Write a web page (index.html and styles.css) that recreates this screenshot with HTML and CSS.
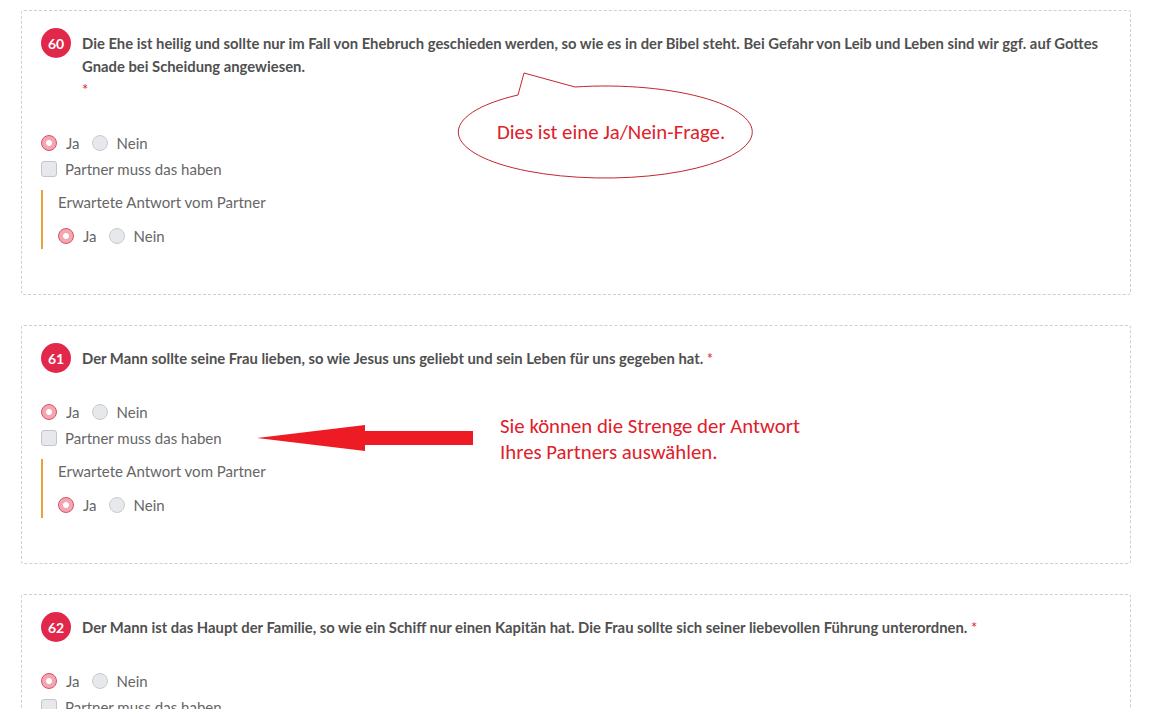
FILE: index.html
```html
<!DOCTYPE html>
<html lang="de">
<head>
<meta charset="utf-8">
<title>Fragen</title>
<link rel="stylesheet" href="styles.css">
</head>
<body>
<div class="page">
  <div class="card">
    <div class="qhead">
      <span class="badge">60</span>
      <div class="qtext">Die Ehe ist heilig und sollte nur im Fall von Ehebruch geschieden werden, so wie es in der Bibel steht. Bei Gefahr von Leib und Leben sind wir ggf. auf Gottes Gnade bei Scheidung angewiesen.<br><span class="req">*</span></div>
    </div>
    <div class="options">
      <div class="radios">
        <span class="opt"><span class="radio on"></span>Ja</span>
        <span class="opt"><span class="radio"></span>Nein</span>
      </div>
      <div class="check"><span class="box"></span>Partner muss das haben</div>
      <div class="partner">
        <div class="plabel">Erwartete Antwort vom Partner</div>
        <div class="radios">
          <span class="opt"><span class="radio on"></span>Ja</span>
          <span class="opt"><span class="radio"></span>Nein</span>
        </div>
      </div>
    </div>
  </div>

  <div class="card">
    <div class="qhead">
      <span class="badge">61</span>
      <div class="qtext">Der Mann sollte seine Frau lieben, so wie Jesus uns geliebt und sein Leben für uns gegeben hat. <span class="req">*</span></div>
    </div>
    <div class="options">
      <div class="radios">
        <span class="opt"><span class="radio on"></span>Ja</span>
        <span class="opt"><span class="radio"></span>Nein</span>
      </div>
      <div class="check"><span class="box"></span>Partner muss das haben</div>
      <div class="partner">
        <div class="plabel">Erwartete Antwort vom Partner</div>
        <div class="radios">
          <span class="opt"><span class="radio on"></span>Ja</span>
          <span class="opt"><span class="radio"></span>Nein</span>
        </div>
      </div>
    </div>
  </div>

  <div class="card">
    <div class="qhead">
      <span class="badge">62</span>
      <div class="qtext">Der Mann ist das Haupt der Familie, so wie ein Schiff nur einen Kapitän hat. Die Frau sollte sich seiner liebevollen Führung unterordnen. <span class="req">*</span></div>
    </div>
    <div class="options">
      <div class="radios">
        <span class="opt"><span class="radio on"></span>Ja</span>
        <span class="opt"><span class="radio"></span>Nein</span>
      </div>
      <div class="check"><span class="box"></span>Partner muss das haben</div>
      <div class="partner">
        <div class="plabel">Erwartete Antwort vom Partner</div>
        <div class="radios">
          <span class="opt"><span class="radio on"></span>Ja</span>
          <span class="opt"><span class="radio"></span>Nein</span>
        </div>
      </div>
    </div>
  </div>

  <svg class="annot" width="1158" height="709" viewBox="0 0 1158 709">
    <path d="M518 95 L524 73 L575 87 A147 46 0 1 1 518 95 Z" fill="#fff" stroke="#c0282f" stroke-width="1"/>
    <path d="M257 438 L365 425 L365 431 L473 431 L473 445 L365 445 L365 451 Z" fill="#ed1c24"/>
  </svg>
  <div class="bubble-text">Dies ist eine Ja/Nein-Frage.</div>
  <div class="note">Sie können die Strenge der Antwort<br>Ihres Partners auswählen.</div>
</div>
</body>
</html>
```
FILE: styles.css
```css
* { box-sizing: border-box; }
html, body { margin: 0; padding: 0; background: #fff; }
body { overflow: hidden; height: 709px; }
.page {
  position: relative;
  width: 1158px;
  height: 709px;
  overflow: hidden;
  padding: 10px 0 0 21px;
  font-family: Lato, "Liberation Sans", sans-serif;
  color: #555;
  display: flex;
  flex-direction: column;
  gap: 30px;
}
.card {
  width: 1110px;
  flex: none;
  border: 1px dashed #cfcfcf;
  border-radius: 3px;
  padding: 17px 12px 45px 19px;
}
.qhead { display: flex; align-items: flex-start; gap: 11px; }
.badge {
  flex: none;
  width: 30px; height: 30px;
  border-radius: 50%;
  background: #e1274a;
  color: #fff;
  font-weight: 700;
  font-size: 14px;
  display: flex; align-items: center; justify-content: center;
}
.qtext {
  font-weight: 700;
  font-size: 14.8px;
  line-height: 23px;
  color: #505050;
  padding: 4px 0 3px;
}
.req { color: #db2828; font-weight: 400; }
.options { margin-top: 26px; font-size: 15px; color: #666; }
.radios { display: flex; height: 26px; align-items: center; gap: 12px; }
.opt { display: flex; align-items: center; gap: 9px; }
.radio {
  width: 16px; height: 16px;
  border-radius: 50%;
  border: 1px solid #c8ccd0;
  background: #e6e8eb;
  display: inline-block;
}
.radio.on {
  border: 1px solid #dc4d60;
  background: radial-gradient(circle, #fff 0 2.5px, #f3a7b2 3.5px);
}
.check { display: flex; align-items: center; gap: 8px; height: 26px; }
.box {
  width: 16px; height: 16px;
  border: 1px solid #c3c6c9;
  border-radius: 3px;
  background: #e6e8eb;
}
.partner {
  margin-top: 8px;
  border-left: 2px solid #e9a23b;
  padding-left: 15px;
}
.plabel { line-height: 24px; margin-bottom: 9px; }
.partner .radios { height: 26px; }
.annot { position: absolute; left: 0; top: 0; pointer-events: none; }
.bubble-text {
  position: absolute;
  left: 497px; top: 118px;
  font-family: Carlito, Lato, "Liberation Sans", sans-serif;
  font-size: 20.8px;
  line-height: 28px;
  color: #e0202a;
}
.note {
  position: absolute;
  left: 500px; top: 413px;
  font-family: Carlito, Lato, "Liberation Sans", sans-serif;
  font-size: 20.8px;
  line-height: 26px;
  color: #e0202a;
}
```
